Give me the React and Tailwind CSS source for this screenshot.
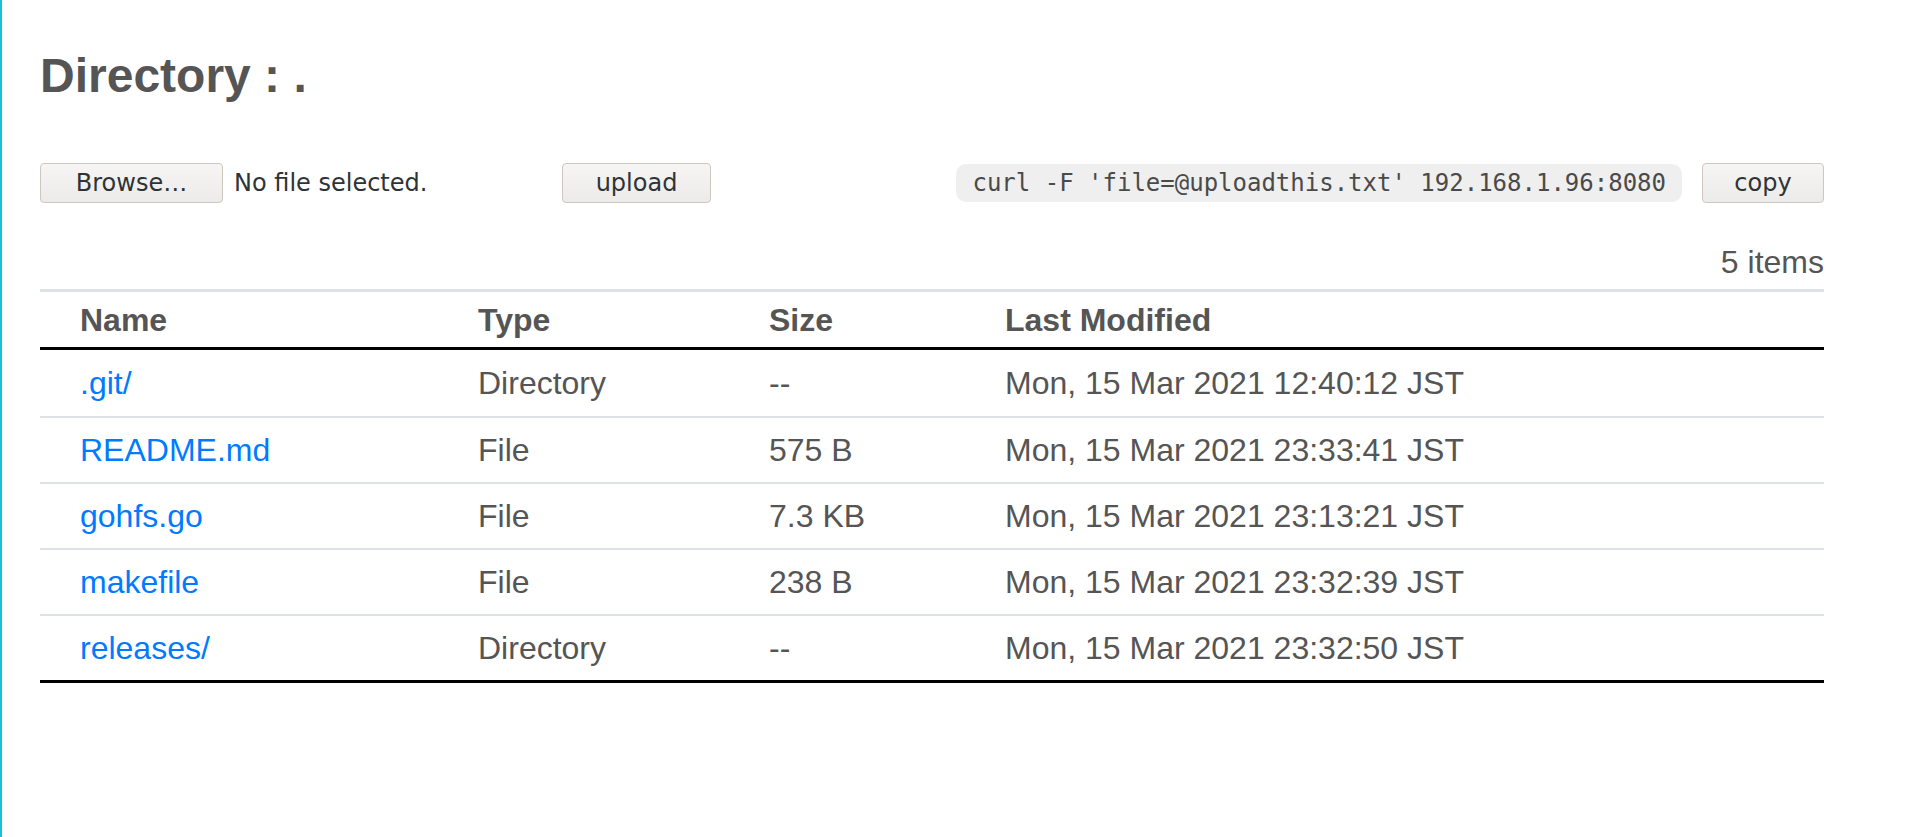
import React from "react";

const FILES = [
  { name: ".git/", type: "Directory", size: "--", modified: "Mon, 15 Mar 2021 12:40:12 JST" },
  { name: "README.md", type: "File", size: "575 B", modified: "Mon, 15 Mar 2021 23:33:41 JST" },
  { name: "gohfs.go", type: "File", size: "7.3 KB", modified: "Mon, 15 Mar 2021 23:13:21 JST" },
  { name: "makefile", type: "File", size: "238 B", modified: "Mon, 15 Mar 2021 23:32:39 JST" },
  { name: "releases/", type: "Directory", size: "--", modified: "Mon, 15 Mar 2021 23:32:50 JST" },
];

const GtkButton = ({ children, className }) => (
  <button
    className={
      "h-[40px] rounded-[4px] border border-[#cdc7c2] bg-linear-to-b from-[#f6f5f4] to-[#edebe9] font-['DejaVu_Sans',sans-serif] text-[24px] leading-none text-[#2e3436] " +
      className
    }
  >
    {children}
  </button>
);

const rowClass = (i) => {
  if (i === FILES.length - 1)
    return "grid h-[67px] grid-cols-[438px_291px_236px_1fr] items-center border-b-[3px] border-black";
  if (i === 0)
    return "grid h-[68px] grid-cols-[438px_291px_236px_1fr] items-center border-b-2 border-[#dee2e6]";
  return "grid h-[66px] grid-cols-[438px_291px_236px_1fr] items-center border-b-2 border-[#dee2e6]";
};

const App = () => {
  return (
    <div className="min-h-screen border-l-2 border-[#18c0d4] bg-white pl-[38px] font-['Liberation_Sans',Arial,sans-serif] text-[#555]">
      <div className="w-[1784px] pt-[52px]">
        <h1 className="text-[48px] font-bold leading-[48px]">Directory : .</h1>

        {/* ---------- upload row ---------- */}
        <div className="mt-[63px] flex h-[40px] items-center">
          <div className="flex w-[522px] items-center">
            <GtkButton className="w-[183px]">Browse…</GtkButton>
            <span className="ml-[11px] font-['DejaVu_Sans',sans-serif] text-[24px] text-[#2e3436]">
              No file selected.
            </span>
          </div>
          <GtkButton className="w-[149px]">upload</GtkButton>
          <code className="ml-auto flex h-[38px] items-center rounded-[10px] bg-[#efefef] px-[16px] font-['DejaVu_Sans_Mono',monospace] text-[24px] text-[#4a4a4a]">
            curl -F 'file=@uploadthis.txt' 192.168.1.96:8080
          </code>
          <GtkButton className="ml-[20px] w-[122px]">copy</GtkButton>
        </div>

        <div className="mt-[39px] text-right text-[32px] leading-[40px]">5 items</div>

        {/* ---------- file table ---------- */}
        <div className="mt-[7px] border-t-[3px] border-[#dee2e6] text-[32px] leading-[40px]">
          <div className="grid h-[58px] grid-cols-[438px_291px_236px_1fr] items-center border-b-[3px] border-black pt-[1px] font-bold">
            <div className="pl-[40px]">Name</div>
            <div>Type</div>
            <div>Size</div>
            <div>Last Modified</div>
          </div>
          {FILES.map((f, i) => (
            <div key={f.name} className={rowClass(i)}>
              <div className="pl-[40px]">
                <a href="#" className="text-[#007bff]">
                  {f.name}
                </a>
              </div>
              <div>{f.type}</div>
              <div>{f.size}</div>
              <div>{f.modified}</div>
            </div>
          ))}
        </div>
      </div>
    </div>
  );
};

export default App;
